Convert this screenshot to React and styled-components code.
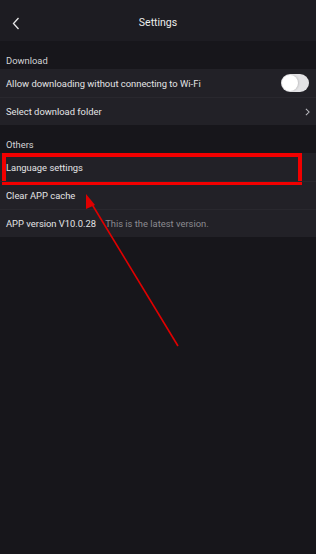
import React from "react";
import styled, { createGlobalStyle } from "styled-components";

const GlobalStyle = createGlobalStyle`
  html, body {
    margin: 0;
    padding: 0;
    background: #17161b;
  }
  body {
    font-family: Roboto, "Liberation Sans", Arial, sans-serif;
  }
`;

const Page = styled.div`
  position: relative;
  width: 316px;
  height: 554px;
  background: #17161b;
  overflow: hidden;
`;

const Header = styled.header`
  height: 41px;
  background: #1d1c22;
  display: flex;
  align-items: center;
  justify-content: center;
  position: relative;
`;

const BackButton = styled.div`
  position: absolute;
  left: 10px;
  top: 15px;
  width: 12px;
  height: 16px;
  display: flex;
  align-items: center;
  justify-content: center;
`;

const Title = styled.h1`
  margin: 0;
  font-size: 10.5px;
  font-weight: 400;
  color: #ececec;
  margin-top: 4px;
`;

const SectionLabel = styled.div`
  height: 28px;
  box-sizing: border-box;
  display: flex;
  align-items: flex-end;
  padding: 0 6px 3px;
  font-size: 9.4px;
  color: #d4d4d6;
`;

const Group = styled.div`
  background: #222127;
`;

const Row = styled.div`
  position: relative;
  height: 28px;
  box-sizing: border-box;
  display: flex;
  align-items: center;
  padding: 0 6px;
  font-size: 9.4px;
  color: #e4e4e6;
  border-top: ${(p) => (p.$first ? "none" : "1px solid #29282e")};
`;

const RowText = styled.span`
  flex: 1;
`;

const Note = styled.span`
  color: #8b8a90;
  margin-left: 9px;
`;

const Switch = styled.div`
  width: 28px;
  height: 18px;
  border-radius: 9px;
  background: #e3e3e5;
  margin-right: 1px;
  position: relative;
  &::after {
    content: "";
    position: absolute;
    left: 1px;
    top: 1px;
    width: 16px;
    height: 16px;
    border-radius: 50%;
    background: #ffffff;
    box-shadow: 1px 0 2px rgba(0, 0, 0, 0.15);
  }
`;

const Highlight = styled.div`
  position: absolute;
  left: 2px;
  right: 14px;
  top: 0px;
  bottom: -4px;
  border: 4px solid #f20000;
  pointer-events: none;
`;

const Annotation = styled.svg`
  position: absolute;
  left: 0;
  top: 0;
  pointer-events: none;
`;

function Chevron({ size = 5, color = "#bdbdc2" }) {
  return (
    <svg width={size} height={size * 1.6} viewBox="0 0 6 10">
      <path d="M1 1 L5 5 L1 9" fill="none" stroke={color} strokeWidth="1.3" />
    </svg>
  );
}

export default function App() {
  return (
    <Page>
      <GlobalStyle />
      <Header>
        <BackButton>
          <svg width="8" height="13" viewBox="0 0 8 13">
            <path d="M6.5 1 L1.5 6.5 L6.5 12" fill="none" stroke="#e6e6e8" strokeWidth="1.3" />
          </svg>
        </BackButton>
        <Title>Settings</Title>
      </Header>

      <SectionLabel>Download</SectionLabel>
      <Group>
        <Row $first>
          <RowText>Allow downloading without connecting to Wi-Fi</RowText>
          <Switch />
        </Row>
        <Row>
          <RowText>Select download folder</RowText>
          <Chevron />
        </Row>
      </Group>

      <SectionLabel>Others</SectionLabel>
      <Group>
        <Row $first>
          <RowText>Language settings</RowText>
          <Highlight />
        </Row>
        <Row>
          <RowText>Clear APP cache</RowText>
        </Row>
        <Row>
          <RowText>
            APP version V10.0.28<Note>This is the latest version.</Note>
          </RowText>
        </Row>
      </Group>

      <Annotation width="316" height="554" viewBox="0 0 316 554">
        <line x1="178" y1="346" x2="90" y2="201" stroke="#e00000" strokeWidth="1.6" />
        <polygon points="86,194 95,205 86,209" fill="#e00000" />
      </Annotation>
    </Page>
  );
}
